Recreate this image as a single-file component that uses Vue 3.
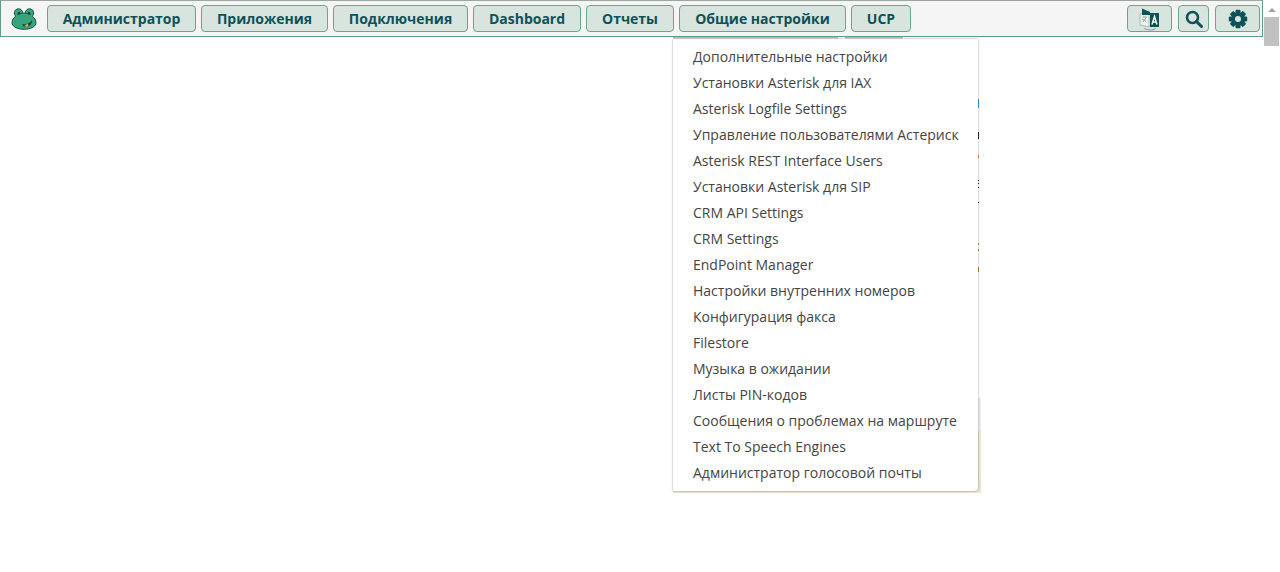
<script setup>
const navItems = [
  { label: 'Администратор', width: 149 },
  { label: 'Приложения', width: 127 },
  { label: 'Подключения', width: 135 },
  { label: 'Dashboard', width: 108 },
  { label: 'Отчеты', width: 88 },
  { label: 'Общие настройки', width: 167 },
  { label: 'UCP', width: 60 },
]
const menuItems = [
  'Дополнительные настройки',
  'Установки Asterisk для IAX',
  'Asterisk Logfile Settings',
  'Управление пользователями Астериск',
  'Asterisk REST Interface Users',
  'Установки Asterisk для SIP',
  'CRM API Settings',
  'CRM Settings',
  'EndPoint Manager',
  'Настройки внутренних номеров',
  'Конфигурация факса',
  'Filestore',
  'Музыка в ожидании',
  'Листы PIN-кодов',
  'Сообщения о проблемах на маршруте',
  'Text To Speech Engines',
  'Администратор голосовой почты',
]
</script>

<template>
  <div class="page">
    <div class="main">
      <header class="nav">
        <svg class="logo" viewBox="0 0 26 22" width="26" height="22" aria-hidden="true">
          <circle cx="7.500" cy="5" r="4.200" fill="#37a47b" stroke="#17594d" stroke-width="1" />
          <circle cx="18.500" cy="5" r="4.200" fill="#37a47b" stroke="#17594d" stroke-width="1" />
          <path d="M13 5C7 5 1 10 1 14.500C1 18.500 6 21.300 13 21.300C20 21.300 25 18.500 25 14.500C25 10 19 5 13 5Z" fill="#37a47b" stroke="#17594d" stroke-width="1" />
          <path d="M5 7H21V11H5Z" fill="#37a47b" />
          <circle cx="8" cy="5.300" r="1.200" fill="#0d3f3b" />
          <circle cx="18" cy="5.300" r="1.200" fill="#0d3f3b" />
          <path d="M11 16.500C15 16.500 19 15 21 12.500C21.500 16 18.500 19 15 19C13 19 11.500 18 11 16.500Z" fill="#0f4a44" />
          <path d="M13.500 17.300L17 15.800L17.500 18.300L15 19Z" fill="#e4a13c" />
        </svg>
        <button v-for="item in navItems" :key="item.label" class="btn" :style="{ width: item.width + 'px' }">{{ item.label }}</button>
        <div class="spacer"></div>
        <div class="tools">
          <button class="btn lang" aria-label="Язык">
            <svg viewBox="0 0 26 24" width="26" height="24" aria-hidden="true">
              <path d="M3 7L12 4V20L3 18Z" fill="#eef1e6" stroke="#a5bdb6" stroke-width="1" />
              <path d="M5 1.500L13 5V8H5Z" fill="#0f5158" />
              <path d="M13 6H22V20H13Z" fill="#0f5158" />
              <path d="M5.500 10H9.500L6 15M5 12L9 14.500" fill="none" stroke="#8fa6a5" stroke-width="1" />
              <path d="M15 17.500L17.500 9.500L20 17.500M15.800 15H19.200" fill="none" stroke="#f2f6f3" stroke-width="1.500" />
              <path d="M7 21.500C11 23.500 15 23.500 19 21.500" fill="none" stroke="#7f9f99" stroke-width="1" />
            </svg>
          </button>
          <button class="btn search" aria-label="Поиск">
            <svg viewBox="0 0 18 18" width="18" height="18" aria-hidden="true">
              <circle cx="7.500" cy="7.500" r="5.500" fill="none" stroke="#0f5158" stroke-width="2.600" />
              <path d="M11.500 11.500L16.500 16.500" stroke="#0f5158" stroke-width="3" stroke-linecap="round" />
            </svg>
          </button>
          <button class="btn gear" aria-label="Настройки">
            <svg viewBox="0 0 20 20" width="20" height="20" aria-hidden="true">
              <g fill="#0f5158">
                <rect v-for="a in [0, 45, 90, 135]" :key="a" x="7.500" y="0.800" width="5" height="18.400" rx="1" :transform="`rotate(${a} 10 10)`" />
              </g>
              <circle cx="10" cy="10" r="6.800" fill="#0f5158" />
              <circle cx="10" cy="10" r="3" fill="#d7e5de" />
            </svg>
          </button>
        </div>
      </header>
      <div class="peek-tab first"></div>
      <div class="peek-tab second"></div>
      <div class="peek-edge"></div>
      <div class="peek-panel"></div>
      <nav class="dropdown">
        <a v-for="item in menuItems" :key="item" class="dropdown-item">{{ item }}</a>
      </nav>
    </div>
    <aside class="scrollbar">
      <span class="arrow"></span>
      <span class="thumb"></span>
    </aside>
  </div>
</template>

<style>
html, body { margin: 0; padding: 0; background: #fff; overflow: hidden; }
</style>

<style scoped>
.page {
  display: flex;
  height: 572px;
  font-family: "Open Sans", "Liberation Sans", sans-serif;
}
.main {
  flex: 1;
  min-width: 0;
  position: relative;
}
.nav {
  box-sizing: border-box;
  height: 37px;
  display: flex;
  align-items: center;
  gap: 5px;
  padding: 0 2px 0 10px;
  background: #f5f5f5;
  border: 1px solid #5f9f85;
  border-top-color: #9aa7a1;
}
.logo { margin-right: 5px; flex: none; }
.btn {
  box-sizing: border-box;
  height: 27px;
  padding: 0;
  background: #d7e5de;
  border: 1px solid #6aa58d;
  border-radius: 4px;
  color: #0f5158;
  font: 700 14px/25px "Open Sans", "Liberation Sans", sans-serif;
  display: flex;
  align-items: center;
  justify-content: center;
}
.spacer { flex: 1; }
.tools { display: flex; gap: 6px; }
.lang { width: 45px; }
.search { width: 31px; }
.gear { width: 45px; }
.peek-tab {
  position: absolute;
  top: 37px;
  height: 2px;
  background: linear-gradient(to bottom, #b4bfba 0 1px, #e2e5e3 1px);
}
.peek-tab.first { left: 673px; width: 165px; }
.peek-tab.second { left: 845px; width: 58px; }
.peek-edge {
  position: absolute;
  left: 978px;
  top: 99px;
  width: 1px;
  height: 191px;
  background: linear-gradient(
    to bottom,
    #3f9bd0 0 9px, transparent 9px 33px,
    #222 33px 40px, transparent 40px 56px,
    #d9913a 56px 59px, transparent 59px 81px,
    #222 81px 82px, transparent 82px 84px,
    #222 84px 85px, transparent 85px 88px,
    #222 88px 89px, transparent 89px 103px,
    #222 103px 104px, transparent 104px 144px,
    #b08c3c 144px 146px, transparent 146px 150px,
    #b08c3c 150px 152px, transparent 152px 168px,
    #b08c3c 168px 173px, transparent 173px
  );
}
.peek-panel {
  position: absolute;
  left: 673px;
  top: 398px;
  width: 308px;
  height: 95px;
  background: linear-gradient(to bottom, #ececec 0 33px, #ece6cc 33px);
}
.dropdown {
  position: absolute;
  left: 673px;
  top: 39px;
  box-sizing: border-box;
  width: 305px;
  height: 452px;
  padding: 5px 0;
  background: #fff;
  border-radius: 0 0 4px 0;
  box-shadow: 0 0 2px rgba(0, 0, 0, 0.5);
}
.dropdown-item {
  display: block;
  height: 26px;
  padding: 0 20px;
  font-size: 14px;
  line-height: 26px;
  color: #444;
  white-space: nowrap;
  text-rendering: optimizeLegibility;
}
.scrollbar {
  width: 17px;
  flex: none;
  background: #fff;
  display: flex;
  flex-direction: column;
  align-items: center;
}
.arrow {
  margin-top: 8px;
  width: 0;
  height: 0;
  border-left: 4px solid transparent;
  border-right: 4px solid transparent;
  border-bottom: 4px solid #a3a3a3;
}
.thumb {
  margin-top: 5px;
  width: 15px;
  height: 29px;
  background: #c1c1c1;
}
</style>
